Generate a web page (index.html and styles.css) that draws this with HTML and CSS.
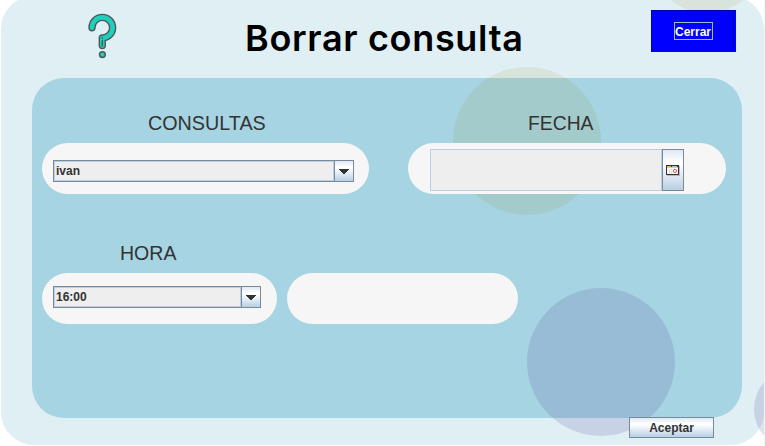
FILE: index.html
```html
<!DOCTYPE html>
<html lang="es">
<head>
<meta charset="utf-8">
<title>Borrar consulta</title>
<link rel="stylesheet" href="styles.css">
</head>
<body>
<div class="window">
  <div class="card"></div>
  <header class="header">
    <svg class="help" width="32" height="50" viewBox="0 0 32 50">
      <g fill="none" stroke-linecap="round" stroke-linejoin="round">
        <path class="outline" d="M6 17.7A10.3 10.3 0 1 1 16.3 28V35.6"/>
        <path class="inside" d="M6 17.7A10.3 10.3 0 1 1 16.3 28V35.6"/>
        <path class="detail" d="M16.3 27.8V28.3M16.3 30.5V36"/>
      </g>
      <circle class="dot" cx="16.4" cy="44.6" r="2.9"/>
    </svg>
    <h1 class="title">Borrar consulta</h1>
    <button class="close"><span>Cerrar</span></button>
  </header>
  <main class="panel">
    <section class="field consultas">
      <label>CONSULTAS</label>
      <div class="pill"><div class="combo"><span class="value">ivan</span><span class="arrow"><svg width="10" height="5" shape-rendering="crispEdges"><path d="M0 0H10L5.5 5H4.5Z"/></svg></span></div></div>
    </section>
    <section class="field fecha">
      <label>FECHA</label>
      <div class="pill"><div class="date"><span class="date-value"></span><span class="picker"><svg width="14" height="11" viewBox="0 0 14 11" shape-rendering="crispEdges"><path fill="#b9b9bb" d="M1 1h13v10H1z"/><path fill="#333" d="M0 0h13v10H0z"/><path fill="#f5f5f5" d="M1 3h11v6H1z"/><path fill="#f7b23b" d="M1 1h4v1H1z"/><path fill="#9cc0ea" d="M6 1h5v1H6z"/><path fill="#ccc" d="M1 2h11v1H1z"/><path fill="#e2e2e2" d="M3 4h1v5H3zM5 4h1v5H5z"/><circle cx="9" cy="6" r="1.6" fill="#fff" stroke="#ee5550" stroke-width="1" shape-rendering="auto"/></svg></span></div></div>
    </section>
    <section class="field hora">
      <label>HORA</label>
      <div class="pill"><div class="combo"><span class="value">16:00</span><span class="arrow"><svg width="10" height="5" shape-rendering="crispEdges"><path d="M0 0H10L5.5 5H4.5Z"/></svg></span></div></div>
    </section>
    <div class="pill empty"></div>
  </main>
  <footer class="footer"><button class="accept">Aceptar</button></footer>
  <i class="circle sand top"></i>
  <i class="circle sand middle"></i>
  <i class="circle violet bottom"></i>
  <i class="circle violet side"></i>
</div>
</body>
</html>
```
FILE: styles.css
```css
* { box-sizing: border-box; }
body { margin: 0; background: #fff; font-family: "Liberation Sans", sans-serif; }
button { font: bold 12px "Liberation Sans", sans-serif; padding: 0; border-radius: 0; }
.window { position: relative; z-index: 0; width: 765px; height: 446px; overflow: hidden; border-right: 1px solid #f3f3f4; }
.card { position: absolute; z-index: -3; inset: -4px 0 1px 1px; border-radius: 33px; background: #e0eff4; }

.header { height: 78px; display: flex; align-items: flex-start; padding: 10px 28px 0 86px; }
.help { flex: none; }
.outline { stroke: #4c5a59; stroke-width: 7.4; }
.inside { stroke: #1fcfbb; stroke-width: 4.6; }
.detail { stroke: #4c5a59; stroke-width: 1.4; }
.dot { fill: #1fcfbb; stroke: #4c5a59; stroke-width: 1.5; }
.title { margin: 4px 0 0 127px; flex: 1; font: 600 36px/48px Inter, sans-serif; letter-spacing: .67px; color: #000; white-space: nowrap; }
.close { width: 85px; height: 42px; flex: none; border: 0; background: #00f; color: #fff; box-shadow: inset 1px 1px #0000b0, inset -2px -2px #00f, inset -3px -3px #0000b0; display: flex; align-items: flex-start; padding: 12px 0 0 23px; }
.close span { width: 39px; height: 18px; line-height: 18px; border: 1px solid #a3b8cc; text-align: left; white-space: nowrap; }

.panel { position: relative; margin-left: 32px; width: 710px; height: 340px; padding: 30px 15px 0 10px; display: grid; grid-template-columns: 235px 92px 38px 111px 209px; grid-template-rows: 130px 130px; }
.panel::before { content: ""; position: absolute; z-index: -2; inset: 0; border-radius: 32px; background: #a6d4e2; }
.field { display: flex; flex-direction: column; }
.field label { align-self: flex-start; height: 35px; line-height: 30px; font-size: 21px; color: #333; white-space: nowrap; transform: scaleX(.94); transform-origin: left; }
.consultas { grid-column: 1 / 3; }
.consultas label { margin-left: 106px; }
.fecha { grid-column: 4 / 6; width: 319px; }
.fecha label { margin-left: 121px; transform: scaleX(.92); }
.hora { grid-column: 1; }
.hora label { margin-left: 77.5px; transform: scaleX(.93); }
.pill { height: 51px; border-radius: 26px; background: #f6f6f6; display: flex; }
.fecha .pill { margin-left: .5px; }
.empty { grid-column: 2 / 5; margin: 35px 0 0 10px; width: 231px; }
.combo { display: flex; height: 22px; margin: 17px 15px 0 11px; flex: 1; border: 1px solid #7a8a99; }
.hora .combo { margin: 13px 16px 0 11px; }
.value { flex: 1; border: 1px solid #b8cfe5; background: #eee; font: bold 12px/18px "Liberation Sans", sans-serif; color: #333; padding-left: 1px; }
.arrow { width: 19px; border-left: 1px solid #7a8a99; background: linear-gradient(#dde8f3, #fff 30%, #fff 35%, #b8cfe5); display: flex; align-items: center; justify-content: center; padding-top: 1px; }
.arrow path { fill: #333; }
.date { display: flex; width: 254px; height: 42px; margin: 6px 0 0 22.5px; }
.date-value { flex: 1; border: 1px solid #b8cfe5; background: #eee; }
.picker { width: 22px; border: 1px solid #7a8a99; background: linear-gradient(#dde8f3, #fff 30%, #fff 35%, #b8cfe5); display: flex; align-items: center; justify-content: center; }

.footer { display: flex; justify-content: flex-end; padding-right: 50px; margin-top: -1px; }
.accept { width: 85px; height: 21px; border: 1px solid #7a8a99; background: linear-gradient(#dde8f3, #fff 30%, #fff 35%, #b8cfe5); color: #333; }

.circle { position: absolute; z-index: -1; width: 148px; height: 148px; border-radius: 50%; }
.sand { background: rgba(160, 139, 40, .12); }
.violet { background: rgba(86, 84, 160, .18); }
.top { left: 650px; top: -101px; width: 114px; height: 114px; }
.middle { left: 452.5px; top: 66.5px; }
.bottom { left: 526.5px; top: 288px; }
.side { left: 754px; top: 368px; width: 82px; height: 82px; }
```
